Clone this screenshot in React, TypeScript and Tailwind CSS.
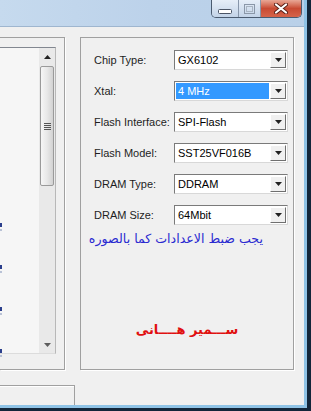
import React from "react";

const UI = "font-['Liberation_Sans',Arial,sans-serif] text-[11px]";

function Arrow({ up }: { up?: boolean }) {
  return (
    <svg width="7" height="4" viewBox="0 0 7 4">
      <path d={up ? "M0 4 L3.5 0 L7 4 Z" : "M0 0 L7 0 L3.5 4 Z"} fill="#222" />
    </svg>
  );
}

function Combo({ value, selected }: { value: string; selected?: boolean }) {
  return (
    <div className="flex h-[20px] w-[114px] border border-t-[#7a7a7a] border-l-[#7a7a7a] border-r-[#d8d8d8] border-b-[#d8d8d8] bg-white p-[1px]">
      <div
        className={
          selected
            ? "flex flex-1 items-center bg-[#3399ff] pl-[2px] text-white"
            : "flex flex-1 items-center pl-[2px] text-black"
        }
      >
        {value}
      </div>
      <div className="ml-[1px] flex w-[16px] items-center justify-center border border-t-white border-l-white border-r-[#6f6f6f] border-b-[#6f6f6f] bg-[#f0f0f0]">
        <Arrow />
      </div>
    </div>
  );
}

const fields: { label: string; value: string; selected?: boolean }[] = [
  { label: "Chip Type:", value: "GX6102" },
  { label: "Xtal:", value: "4 MHz", selected: true },
  { label: "Flash Interface:", value: "SPI-Flash" },
  { label: "Flash Model:", value: "SST25VF016B" },
  { label: "DRAM Type:", value: "DDRAM" },
  { label: "DRAM Size:", value: "64Mbit" },
];

function CaptionButtons() {
  return (
    <div className="mr-[2px] flex h-[18px] overflow-hidden rounded-b-[5px] border border-t-0 border-[#4a5b70]">
      <div className="flex w-[27px] items-center justify-center border-r border-[#8796aa] bg-gradient-to-b from-[#e6eef8] to-[#c3d4e8]">
        <svg width="14" height="5" viewBox="0 0 14 5" className="mt-[6px]">
          <rect x="0.5" y="0.5" width="13" height="4" rx="1" fill="#fff" stroke="#4b5566" />
        </svg>
      </div>
      <div className="flex w-[22px] items-center justify-center border-r border-[#8796aa] bg-gradient-to-b from-[#e6eef8] to-[#c3d4e8]">
        <svg width="11" height="10" viewBox="0 0 11 10">
          <rect x="0.5" y="0.5" width="10" height="9" fill="none" stroke="#8a97a8" />
          <rect x="2.5" y="2.5" width="6" height="5" fill="none" stroke="#a8b4c2" />
        </svg>
      </div>
      <div className="flex w-[40px] items-center justify-center bg-gradient-to-b from-[#e8a796] via-[#c84a33] to-[#d6644a]">
        <svg width="14" height="11" viewBox="0 0 14 11">
          <path d="M2 1.5 L12 9.5 M12 1.5 L2 9.5" stroke="#5a2018" strokeWidth="4" strokeLinecap="round" />
          <path d="M2 1.5 L12 9.5 M12 1.5 L2 9.5" stroke="#fff" strokeWidth="2.2" strokeLinecap="round" />
        </svg>
      </div>
    </div>
  );
}

export default function App() {
  return (
    <div className={`h-[411px] w-[311px] overflow-hidden bg-[#13263a] ${UI}`}>
      <div className="flex h-[408px] w-[307px] flex-col border-r-[3px] border-b-[3px] border-[#8fc3e6]">
        <div className="flex h-[27px] shrink-0 justify-end border-b border-[#9fb6cf] bg-gradient-to-r from-[#c6daee] via-[#bcd2ea] to-[#b9d0e8]">
          <CaptionButtons />
        </div>

        <div className="flex flex-1 flex-col bg-[#f0f0f0]">
          <div className="mt-[10px] flex gap-[15px]">
            {/* left panel, clipped at the window edge */}
            <div className="flex h-[333px] w-[65px] flex-col border border-l-0 border-[#a0a0a0] pt-[9px] pr-[8px] shadow-[1px_1px_0_#fff]">
              <div className="flex h-[307px] border border-l-0 border-t-[#828790] border-r-[#b8b8b8] border-b-[#dcdcdc] bg-[#f6f6f6]">
                <div className="flex flex-1 flex-col gap-[34px] pt-[175px]">
                  {[0, 1, 2, 3].map((i) => (
                    <div key={i} className="flex flex-col gap-[2px]">
                      <span className="h-[4px] w-[2px] bg-[#2b3f8c]" />
                      <span className="h-[2px] w-[2px] bg-[#b9c2d6]" />
                    </div>
                  ))}
                </div>
                <div className="flex w-[16px] flex-col bg-[#e9e9e9]">
                  <div className="flex h-[18px] items-center justify-center">
                    <Arrow up />
                  </div>
                  <div className="mx-[1px] flex h-[120px] items-center justify-center rounded-[2px] border border-[#9a9a9a] bg-gradient-to-r from-[#f6f6f6] via-[#e8e8e8] to-[#d2d2d2]">
                    <div className="flex flex-col gap-[1px]">
                      <span className="h-[1px] w-[7px] bg-[#555]" />
                      <span className="h-[1px] w-[7px] bg-[#555]" />
                      <span className="h-[1px] w-[7px] bg-[#555]" />
                      <span className="h-[1px] w-[7px] bg-[#555]" />
                    </div>
                  </div>
                  <div className="flex-1" />
                  <div className="flex h-[17px] items-center justify-center opacity-70">
                    <Arrow />
                  </div>
                </div>
              </div>
            </div>

            {/* settings group */}
            <div className="flex h-[333px] w-[214px] flex-col border border-[#a0a0a0] pt-[12px] shadow-[1px_1px_0_#fff]">
              <div className="flex flex-col gap-[11px]">
                {fields.map((f) => (
                  <div key={f.label} className="flex items-center pl-[13px]">
                    <span className="w-[80px] text-[#1e1e1e]">{f.label}</span>
                    <Combo value={f.value} selected={f.selected} />
                  </div>
                ))}
              </div>
              <div
                dir="rtl"
                className="mt-[6px] pr-[30px] font-['DejaVu_Sans',sans-serif] text-[12.6px] leading-[16px] text-[#2a2ad0]"
              >
                يجب ضبط الاعدادات كما بالصوره
              </div>
              <div
                dir="rtl"
                className="mt-[75px] text-center font-['DejaVu_Sans',sans-serif] text-[13px] font-bold leading-[16px] text-[#e01010]"
              >
                ســـمير هــــانى
              </div>
            </div>
          </div>

          <div className="mt-[15px] w-[75px] flex-1 border-t border-r border-[#a0a0a0] shadow-[inset_0_1px_0_#fff]" />
        </div>
      </div>
    </div>
  );
}
